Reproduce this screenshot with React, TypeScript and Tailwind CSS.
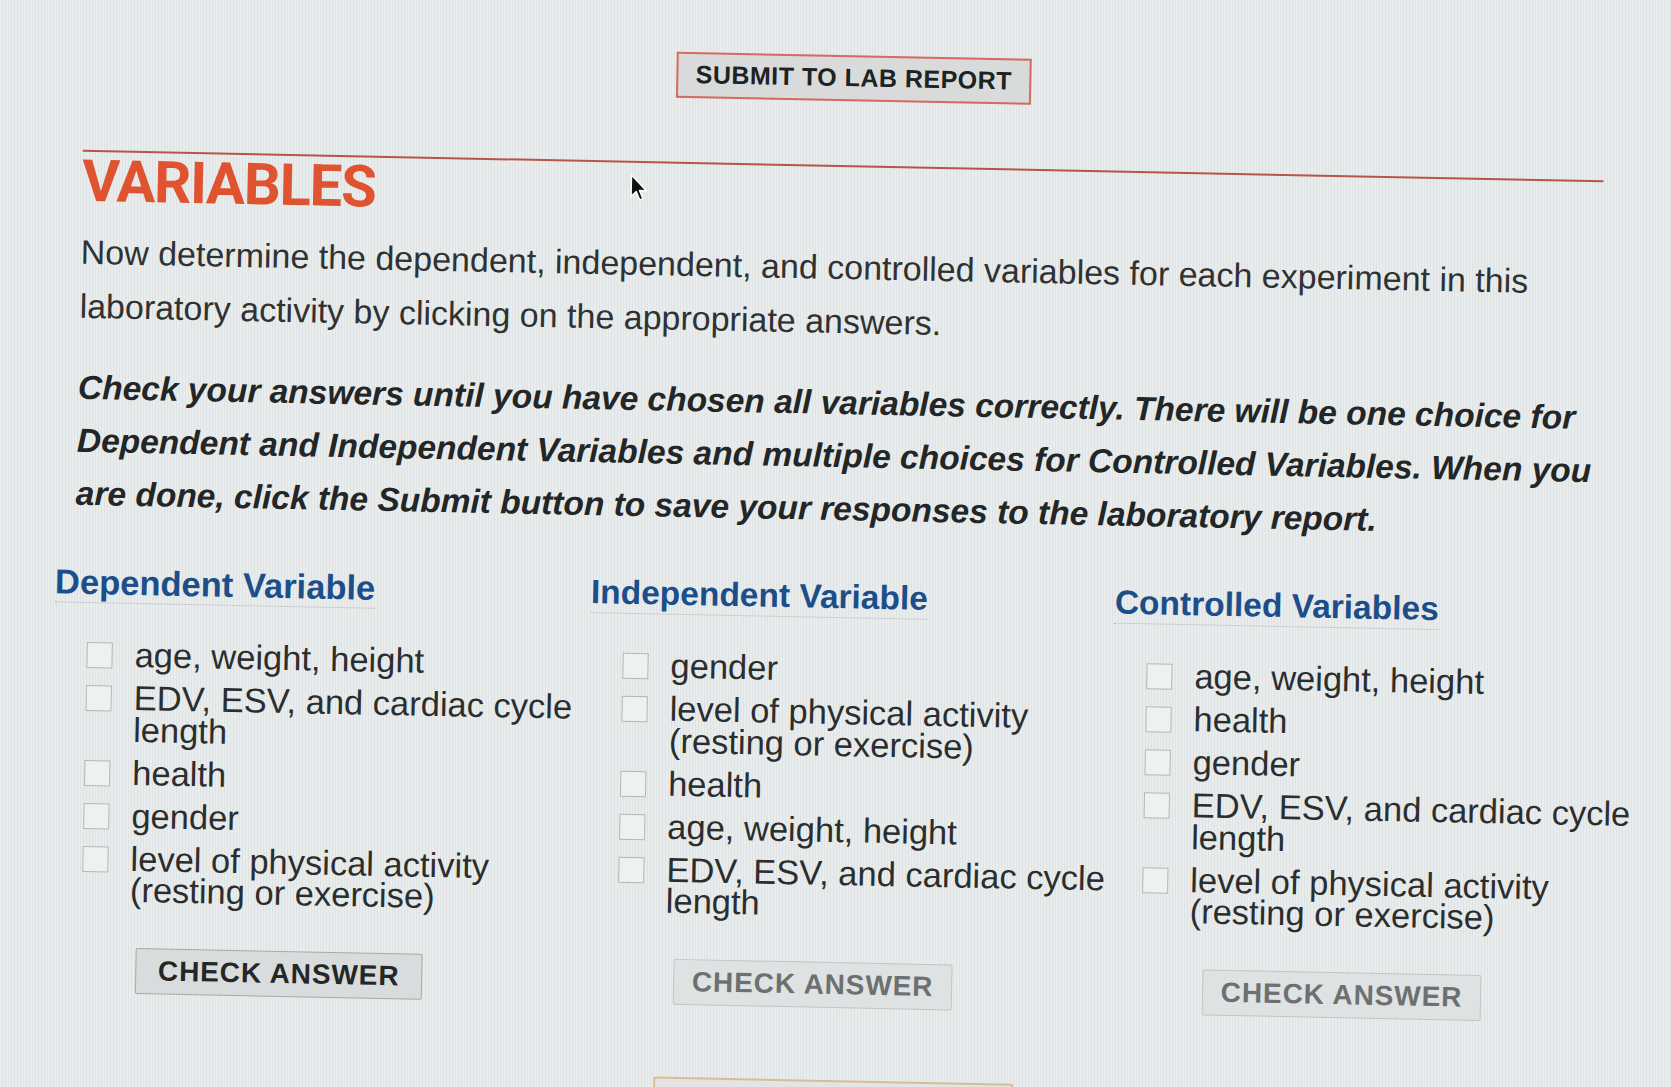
import React from "react";

type Column = {
  title: string;
  width: string;
  titleSize: string;
  items: string[];
  buttonClass: string;
  textClass: string;
};

const columns: Column[] = [
  {
    title: "Dependent Variable",
    width: "w-[536px]",
    titleSize: "text-[34.5px]",
    items: [
      "age, weight, height",
      "EDV, ESV, and cardiac cycle length",
      "health",
      "gender",
      "level of physical activity (resting or exercise)",
    ],
    buttonClass: "ml-[88px] w-[287px] border-[#a7aaaa] bg-[#d9dcdc]",
    textClass: "text-[#252727]",
  },
  {
    title: "Independent Variable",
    width: "w-[524px]",
    titleSize: "text-[33.5px]",
    items: [
      "gender",
      "level of physical activity (resting or exercise)",
      "health",
      "age, weight, height",
      "EDV, ESV, and cardiac cycle length",
    ],
    buttonClass: "ml-[90px] w-[279px] border-[#c2c5c5] bg-[#dfe2e2]",
    textClass: "text-[#6c7070]",
  },
  {
    title: "Controlled Variables",
    width: "w-[555px]",
    titleSize: "text-[33.5px]",
    items: [
      "age, weight, height",
      "health",
      "gender",
      "EDV, ESV, and cardiac cycle length",
      "level of physical activity (resting or exercise)",
    ],
    buttonClass: "ml-[95px] w-[279px] border-[#c2c5c5] bg-[#dfe2e2]",
    textClass: "text-[#6c7070]",
  },
];

const Cursor = () => (
  <svg
    className="absolute left-[623px] top-[178px] w-[18px] h-[28px]"
    viewBox="0 0 16 25"
  >
    <path
      d="M1 1 L1 20 L5.5 15.8 L8.8 23.2 L11.6 22 L8.4 14.8 L14.5 14.8 Z"
      fill="#111"
      stroke="#fff"
      strokeWidth="1.3"
      strokeLinejoin="round"
    />
  </svg>
);

const App = () => {
  return (
    <div className="w-[1671px] h-[1087px] overflow-hidden bg-[#e6e9e9] bg-[repeating-linear-gradient(90deg,#e9ecec_0px,#e9ecec_2px,#e0e3e3_2px,#e0e3e3_3px)] font-['Liberation_Sans',Arial,sans-serif]">
      <div className="relative w-[1671px] h-[1087px] rotate-[1.15deg] pt-[55px]">
        <div className="flex justify-center pl-[18px]">
          <button className="w-[355px] h-[46px] border-2 border-[#d36b60] bg-[#d8dbda] text-[25px] font-bold tracking-[0.5px] text-[#1d2222]">
            SUBMIT TO LAB REPORT
          </button>
        </div>

        <div className="ml-[75px] w-[1521px] mt-[64px] h-[2px] bg-[#b7544b]"></div>

        <div className="pl-[75px]">
          <h1 className="mt-[1px] font-['Roboto',Arial,sans-serif] text-[58px] leading-[56px] font-bold tracking-[-1.3px] text-[#df5330]">
            VARIABLES
          </h1>

          <p className="mt-[16px] w-[1545px] text-[34px] leading-[54px] text-[#2f3232]">
            Now determine the dependent, independent, and controlled variables
            for each experiment in this laboratory activity by clicking on the
            appropriate answers.
          </p>

          <p className="mt-[28px] w-[1545px] text-[33.5px] leading-[53px] font-bold italic text-[#222626]">
            Check your answers until you have chosen all variables correctly.
            There will be one choice for Dependent and Independent Variables and
            multiple choices for Controlled Variables. When you are done, click
            the Submit button to save your responses to the laboratory report.
          </p>
        </div>

        <div className="flex pl-[56px] mt-[42px]">
          {columns.map((col) => (
            <div className={`${col.width} shrink-0`} key={col.title}>
              <h2
                className={`${col.titleSize} inline-block leading-[40px] font-bold text-[#1c4f8a] border-b border-dotted border-[#b3b6b6]`}
              >
                {col.title}
              </h2>
              <ul className="mt-[36px] pl-[33px] flex flex-col gap-[11.5px]">
                {col.items.map((item) => (
                  <li className="flex items-start" key={item}>
                    <span className="mt-[3px] w-[26px] h-[26px] shrink-0 border border-[#b3b6b6] bg-[#eff1f1]"></span>
                    <span className="ml-[22px] w-[455px] text-[34.5px] leading-[31.5px] text-[#2b2e2e]">
                      {item}
                    </span>
                  </li>
                ))}
              </ul>
              <button
                className={`${col.buttonClass} ${col.textClass} mt-[41px] h-[46px] border rounded-[2px] text-[28px] font-bold tracking-[0.9px] block`}
              >
                CHECK ANSWER
              </button>
            </div>
          ))}
        </div>

        <div className="flex justify-center pl-[16px] mt-[72px]">
          <div className="w-[360px] h-[40px] border-2 border-[#d9bc92] rounded-[2px] bg-[#e3e5e4]"></div>
        </div>

        <Cursor />
      </div>
    </div>
  );
};

export default App;
